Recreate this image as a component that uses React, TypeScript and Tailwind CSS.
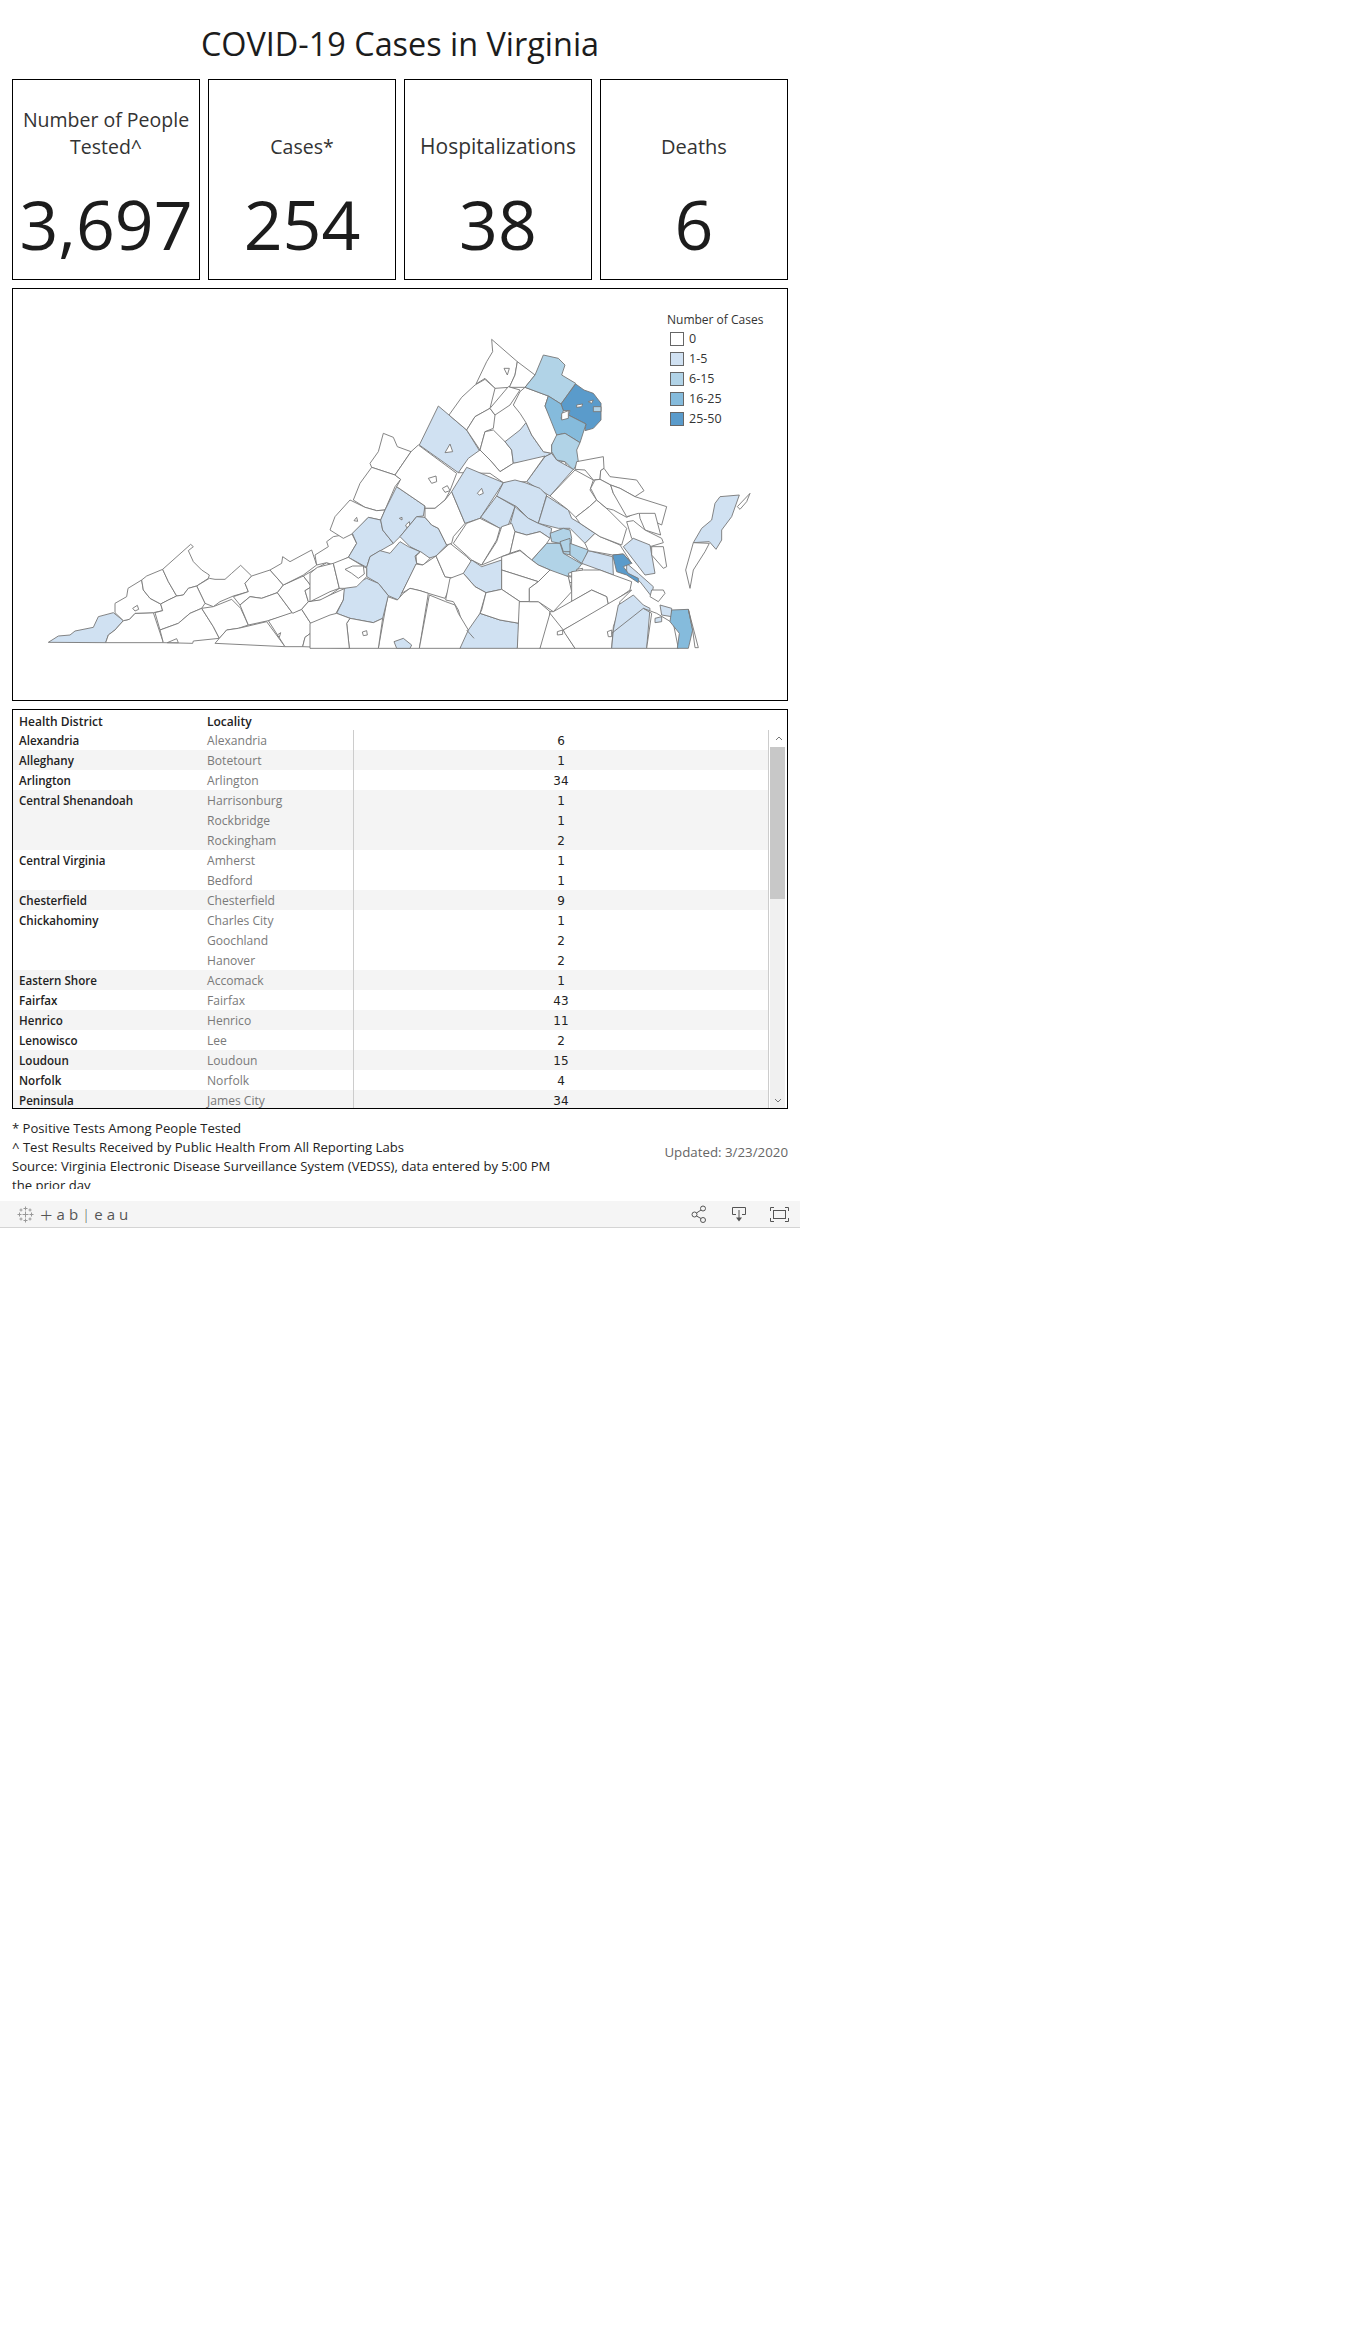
const FONT = "font-['Open_Sans',sans-serif]"

const C0 = '#ffffff'
const C1 = '#d0e1f2'
const C2 = '#b1d3e7'
const C3 = '#85bbdc'
const C4 = '#5a9bcb'

const stats = [
  { label: 'Number of People Tested^', value: '3,697', labelClass: 'w-[180px] text-[19.500px]' },
  { label: 'Cases*', value: '254', labelClass: 'text-[19.500px]' },
  { label: 'Hospitalizations', value: '38', labelClass: 'text-[21px]' },
  { label: 'Deaths', value: '6', labelClass: 'text-[20px]' },
]

const legend = [
  { label: '0', color: C0 },
  { label: '1-5', color: C1 },
  { label: '6-15', color: C2 },
  { label: '16-25', color: C3 },
  { label: '25-50', color: C4 },
]

const rows = [
  { district: 'Alexandria', locality: 'Alexandria', count: 6, shaded: false },
  { district: 'Alleghany', locality: 'Botetourt', count: 1, shaded: true },
  { district: 'Arlington', locality: 'Arlington', count: 34, shaded: false },
  { district: 'Central Shenandoah', locality: 'Harrisonburg', count: 1, shaded: true },
  { district: '', locality: 'Rockbridge', count: 1, shaded: true },
  { district: '', locality: 'Rockingham', count: 2, shaded: true },
  { district: 'Central Virginia', locality: 'Amherst', count: 1, shaded: false },
  { district: '', locality: 'Bedford', count: 1, shaded: false },
  { district: 'Chesterfield', locality: 'Chesterfield', count: 9, shaded: true },
  { district: 'Chickahominy', locality: 'Charles City', count: 1, shaded: false },
  { district: '', locality: 'Goochland', count: 2, shaded: false },
  { district: '', locality: 'Hanover', count: 2, shaded: false },
  { district: 'Eastern Shore', locality: 'Accomack', count: 1, shaded: true },
  { district: 'Fairfax', locality: 'Fairfax', count: 43, shaded: false },
  { district: 'Henrico', locality: 'Henrico', count: 11, shaded: true },
  { district: 'Lenowisco', locality: 'Lee', count: 2, shaded: false },
  { district: 'Loudoun', locality: 'Loudoun', count: 15, shaded: true },
  { district: 'Norfolk', locality: 'Norfolk', count: 4, shaded: false },
  { district: 'Peninsula', locality: 'James City', count: 34, shaded: true },
]

// traced at 3x: southwest of the state
const westShapes: [string, string][] = [
  [C1, '145,1087 175,1068 210,1065 225,1053 280,1042 295,1010 340,998 370,1022 345,1050 325,1065 317,1088'],
  [C0, '317,1088 325,1065 345,1050 370,1022 388,1018 405,1000 460,998 490,1088'],
  [C0, '345,998 345,970 380,950 384,925 425,900 430,930 450,955 482,972 488,992 460,998 405,1000 388,1018 370,1022'],
  [C0, '425,900 440,888 488,868 505,905 530,948 505,960 482,972 450,955 430,930'],
  [C0, '488,868 572,793 580,800 565,812 580,845 605,870 628,885 625,895 590,918 565,925 550,945 530,948 505,905'],
  [C0, '590,918 628,895 645,898 675,898 695,880 722,856 755,888 735,910 745,935 700,948 660,965 640,980 615,970'],
  [C0, '482,972 505,960 530,948 550,945 565,925 590,918 615,970 605,985 570,1000 535,1030 480,1050 465,998 488,992'],
  [C0, '480,1050 535,1030 570,1000 605,985 640,1040 658,1075 580,1083 578,1090 490,1088'],
  [C0, '605,985 640,980 695,958 722,985 745,1035 715,1045 680,1050 658,1075 640,1040'],
  [C0, '755,888 810,870 850,915 832,938 785,955 750,950 720,975 700,950 745,935 735,910'],
  [C0, '720,975 750,950 785,955 832,938 878,1000 805,1022 745,1035'],
  [C0, '645,1090 658,1075 680,1050 715,1045 800,1025 855,1100'],
  [C0, '805,1022 905,988 945,1050 915,1072 908,1100 855,1100'],
  [C0, '832,938 850,915 910,888 935,920 915,932 925,965 905,988 878,1000'],
  [C0, '810,870 845,850 848,830 870,845 935,810 950,855 910,885 850,915'],
  [C0, '910,888 980,848 1000,858 1015,890 1018,925 990,945 965,960 925,965 915,932 935,920'],
  [C0, '905,988 925,965 960,960 990,945 1035,925 1030,960 1005,1005 970,1020 945,1050'],
  [C0, '908,1100 915,1072 945,1050 970,1020 1005,1005 1050,1015 1052,1030 1040,1035 1050,1105'],
  [C0, '1000,855 1045,835 1100,865 1095,890 1070,920 1035,915 1018,925 1015,890'],
  [C0, '1035,875 1055,862 1085,858 1095,885 1072,895 1050,880'],
  [C0, '945,825 985,800 980,785 1000,770 1055,760 1070,790 1045,832 1000,855 980,848 950,855'],
  [C0, '398,985 412,976 416,988 405,993'],
  [C0, '502,1088 530,1076 535,1088'],
  [C0, '832,1065 842,1058 838,1072'],
]

// middle of the state, from the crop at 310,430
const middleShapes: [string, string][] = [
  [C0, '180,100 205,65 220,10 250,22 262,50 303,65 255,135 185,112'],
  [C0, '185,112 255,135 272,148 255,170 225,240 200,242 165,232 130,210 150,160'],
  [C0, '120,210 165,232 200,242 225,240 212,270 175,262 130,310 100,325 60,300 75,260'],
  [C0, '132,272 140,262 143,274'],
  [C1, '175,262 212,270 218,300 250,340 180,380 170,412 115,382 140,340 127,310'],
  [C1, '260,170 345,228 340,258 320,260 270,320 250,340 218,300 212,270 225,240'],
  [C0, '268,265 276,262 276,270'],
  [C0, '287,285 298,275 300,288 290,293'],
  [C0, '260,170 345,228 345,235 375,235 405,210 420,182 440,130 325,45 303,65 255,135 272,148'],
  [C0, '355,145 378,138 380,155 365,160'],
  [C0, '397,175 412,167 420,182 405,187'],
  [C1, '270,320 320,260 345,262 365,285 385,295 410,345 378,378 355,385 330,365 300,350'],
  [C1, '170,412 180,380 210,362 240,370 270,335 295,350 330,365 315,378 320,400 275,490 265,510 235,497 205,460 170,440'],
  [C0, '320,400 318,378 332,365 360,385 340,405'],
  [C0, '275,490 318,402 338,405 378,378 405,440 430,445 405,505 355,490 330,482 300,475'],
  [C0, '233,500 262,510 280,490 300,475 330,482 355,490 328,655 205,655'],
  [C1, '103,475 170,445 205,460 235,497 218,565 190,578 120,565 80,550 100,510'],
  [C0, '120,565 190,578 218,565 205,655 118,655 110,580'],
  [C0, '157,606 170,602 172,615 160,617'],
  [C0, '378,378 420,340 470,380 485,395 460,435 430,445 405,440'],
  [C0, '345,235 375,235 405,210 425,185 465,280 430,320 425,340 410,345 385,295 365,285 345,262'],
  [C0, '0,430 22,412 70,400 88,475 60,485 0,515'],
  [C0, '70,400 115,382 170,415 170,440 140,470 103,475 88,475'],
  [C0, '105,418 128,408 160,408 163,432 145,445 125,430'],
  [C0, '0,580 60,555 80,550 120,565 110,580 118,655 0,655'],
  [C1, '252,635 280,625 305,645 300,655 260,655'],
]

// north and east of the state
const eastShapes: [string, string][] = [
  [C1, '58,495 115,378 200,450 240,515 175,578'],
  [C0, '135,518 150,492 158,515'],
  [C0, '275,178 278,215 260,245 228,312 255,295 285,325 328,322 345,285 352,245'],
  [C0, '312,265 328,265 322,285'],
  [C0, '352,245 405,285 375,322 328,322 345,285'],
  [C0, '147,405 185,352 225,315 255,298 285,325 270,385 225,410 200,450'],
  [C0, '200,450 225,410 270,385 285,405 280,445 255,455 240,510'],
  [C0, '270,385 325,320 360,330 330,375 285,405'],
  [C0, '240,510 255,455 280,450 315,485 335,510 340,550 300,575 270,540'],
  [C1, '315,485 360,450 378,428 395,465 430,515 455,520 435,530 375,545 340,550 335,510'],
  [C0, '375,322 445,348 435,378 470,445 478,465 455,495 455,520 430,515 395,465 378,428 360,400 340,375 360,335'],
  [C2, '375,322 405,285 430,225 475,235 495,255 485,285 527,310 483,372 445,348'],
  [C4, '483,372 527,312 552,330 580,340 603,370 603,420 580,445 555,452 558,432 505,405 510,392 490,392'],
  [C2, '580,380 603,380 603,395 580,395'],
  [C0, '530,375 548,372 545,380 530,382'],
  [C0, '565,365 580,360 575,370'],
  [C3, '445,348 483,372 490,392 483,415 505,405 558,432 540,488 495,460 470,465 435,378'],
  [C0, '485,400 505,392 505,415 485,420'],
  [C2, '470,465 495,460 540,488 530,510 535,545 520,570 495,545 470,540 455,515 455,495'],
  [C0, '482,545 495,545 500,558 490,560'],
  [C1, '435,530 455,520 470,540 520,568 450,648 380,605'],
  [C0, '175,578 205,535 240,510 270,540 300,575 340,550 435,528 380,605 310,608 270,580'],
  [C1, '200,562 310,608 240,715 195,730 155,635'],
  [C0, '232,640 245,625 250,640 238,645'],
  [C1, '290,648 345,680 325,735 300,745 242,712'],
  [C1, '310,608 345,600 375,608 420,625 440,645 415,730 385,715 350,680 290,648'],
  [C1, '440,648 505,690 515,715 540,730 585,760 555,790 510,745 475,745 415,730'],
  [C0, '450,648 525,570 580,600 570,630 590,660 568,680 527,712 505,690'],
  [C1, '345,680 385,715 415,730 455,745 450,775 420,755 380,765 345,755 330,735'],
  [C2, '450,760 490,745 510,750 515,775 510,825 490,820 480,790 455,785'],
  [C2, '480,785 510,775 512,815 490,815'],
  [C2, '510,790 565,810 548,852 510,825'],
  [C2, '395,840 440,790 480,790 490,820 545,852 520,885 480,893 450,870 415,855'],
  [C0, '505,880 520,875 520,888 507,888'],
  [C0, '530,868 548,865 545,878 530,878'],
  [C0, '502,890 528,892 530,905 510,908'],
  [C1, '565,812 638,830 640,885 600,870 545,850'],
  [C0, '555,790 585,760 600,770 660,795 695,850 670,822 638,825 565,812'],
  [C0, '527,712 568,680 590,660 625,690 680,745 665,795 600,770 585,760 540,730'],
  [C0, '530,545 610,530 612,565 602,572 600,598 580,600 555,570 525,568'],
  [C0, '602,572 612,565 630,590 710,600 732,632 705,650 660,625 632,615 600,598'],
  [C0, '572,625 585,600 600,598 632,615 640,640 695,705 680,712 640,690 620,685 590,660'],
  [C0, '705,650 800,680 785,735 715,700 680,710 640,640 632,615 660,625'],
  [C0, '718,700 765,700 782,765 735,750 720,715'],
  [C0, '680,725 700,722 735,750 785,775 790,788 750,800 695,775'],
  [C1, '700,775 750,795 765,880 735,885 670,800'],
  [C0, '755,800 790,800 800,860 790,865 755,825'],
  [C1, '680,850 715,880 760,920 755,950 720,905 680,880'],
  [C4, '638,825 670,822 695,850 670,860 685,880 715,895 715,908 680,885 650,875'],
  [C0, '755,930 790,930 795,940 775,965 750,950'],
  [C0, '160,790 200,730 240,715 300,745 290,780 245,855 215,840'],
  [C0, '245,855 290,785 305,740 335,730 345,755 330,820 305,830'],
  [C0, '345,755 380,765 420,755 450,775 440,790 395,840 360,810 330,820'],
  [C1, '190,880 215,840 245,860 305,840 305,928 258,938 225,920'],
  [C0, '305,830 360,812 395,840 415,855 450,870 415,905 305,870'],
  [C0, '305,870 415,905 388,925 388,965 360,965 305,928'],
  [C1, '240,1000 300,1020 358,1030 352,1105 180,1105 190,1050'],
  [C0, '137,960 150,895 190,880 225,920 258,938 240,1000 205,1050 190,1040 175,990 160,965'],
  [C0, '88,945 137,965 165,975 175,1000 205,1050 180,1105 58,1105'],
  [C0, '245,990 258,938 305,928 360,965 358,1030 300,1020 240,1000'],
  [C0, '358,965 388,965 415,965 450,995 450,1040 420,1105 352,1105'],
  [C0, '388,925 415,905 450,870 505,890 515,935 460,995 415,965 388,965'],
  [C0, '515,875 550,870 600,870 640,885 695,905 690,930 625,975 620,950 575,930 515,965'],
  [C0, '460,995 575,930 620,950 625,975 490,1050 450,1040 450,995'],
  [C0, '450,1000 490,1050 525,1105 420,1105'],
  [C0, '490,1050 695,930 660,965 650,1010 640,1040 635,1105 525,1105 495,1060'],
  [C1, '655,975 700,945 730,975 750,985 740,1105 635,1105 640,1050'],
  [C0, '472,1055 488,1050 488,1063 472,1065'],
  [C0, '622,1055 635,1050 635,1070 625,1070'],
  [C0, '730,985 770,1000 820,1030 835,1105 740,1105 755,1000'],
  [C1, '780,975 815,985 815,1010 785,1005'],
  [C1, '765,1015 785,1010 785,1025 765,1028'],
  [C3, '815,990 865,988 878,1050 865,1105 832,1105 838,1060 810,1025'],
  [C0, '865,988 895,1103 885,1103 878,1050'],
  [C1, '880,788 905,745 935,720 945,670 960,650 1018,645 995,710 965,750 965,780 948,808 928,785'],
  [C0, '880,788 928,790 915,815 880,870 870,925 857,870'],
  [C0, '1012,680 1050,640 1040,665 1020,688'],
]

const Shapes = ({ items, transform }: { items: [string, string][]; transform: string }) => (
  <g transform={transform} stroke="#777777" strokeWidth="2.7" strokeLinejoin="round">
    {items.map(([color, points], i) => (
      <polygon key={i} fill={color} points={points} />
    ))}
  </g>
)

const VirginiaMap = () => (
  <svg className="absolute left-[-13px] top-[-9px]" width="800" height="420" viewBox="0 0 2400 1260">
    <Shapes items={westShapes} transform="translate(0 0)" />
    <Shapes items={middleShapes} transform="translate(930 450)" />
    <Shapes items={eastShapes} transform="translate(1200 0)" />
    <path d="M1835 1060 1930 985M1400 1050 1422 1075" stroke="#777777" strokeWidth="2.7" fill="none" />
  </svg>
)

const TableauMark = () => (
  <svg width="17" height="17" viewBox="0 0 17 17" stroke="#999999" strokeWidth="1" fill="none">
    <path d="M8.500 5.500v6M5.500 8.500h6" />
    <path d="M8.500 0.500v4M6.500 2.500h4M8.500 12.500v4M6.500 14.500h4M0.500 8.500h4M2.500 6.500v4M12.500 8.500h4M14.500 6.500v4" />
    <path d="M4 2.500v3M2.500 4h3M13 2.500v3M11.500 4h3M4 11.500v3M2.500 13h3M13 11.500v3M11.500 13h3" />
  </svg>
)

const ShareIcon = () => (
  <svg width="16" height="18" viewBox="0 0 16 18" fill="none" stroke="#555555" strokeWidth="1">
    <circle cx="3.500" cy="9.500" r="2.500" />
    <circle cx="12" cy="3.500" r="2.500" />
    <circle cx="12" cy="15" r="2.500" />
    <path d="M5.500 8 10 5M5.500 11 10 13.500" />
  </svg>
)

const DownloadIcon = () => (
  <svg width="16" height="16" viewBox="0 0 16 16" fill="none" stroke="#555555" strokeWidth="1">
    <path d="M5 8.500H1.500V1.500H14.500V8.500H11" />
    <path d="M8 4V13" />
    <path d="M5 11.500H11L8 15.500Z" fill="#555555" stroke="none" />
  </svg>
)

const FullscreenIcon = () => (
  <svg width="19" height="15" viewBox="0 0 19 15" fill="none" stroke="#555555" strokeWidth="1">
    <path d="M0.500 4V0.500H4M15 0.500H18.500V4M18.500 11V14.500H15M4 14.500H0.500V11" />
    <rect x="3.500" y="3.500" width="12" height="8" />
  </svg>
)

export default function App() {
  return (
    <div className={`${FONT} min-h-[2326px] w-[800px] bg-white text-[#222]`}>
      <h1 className="flex h-[79px] items-center justify-center pt-[7px] text-[32.400px] font-normal text-[#1c1c1c]">
        COVID-19 Cases in Virginia
      </h1>

      <div className="flex gap-2 px-3">
        {stats.map((stat) => (
          <div key={stat.value} className="h-[201px] w-[188px] border border-black">
            <div className="flex h-[80px] items-end justify-center">
              <div className={`${stat.labelClass} text-center leading-[27px] text-[#333]`}>{stat.label}</div>
            </div>
            <div className="mt-[32px] text-center text-[68px] leading-[64px] text-[#1c1c1c]">{stat.value}</div>
          </div>
        ))}
      </div>

      <div className="relative mx-3 mt-2 h-[413px] border border-black">
        <VirginiaMap />
        <div className="absolute left-[654px] top-[22px] text-[12px] text-[#333]">
          <div className="leading-[18px]">Number of Cases</div>
          <div className="mt-[3px] flex flex-col gap-[6px] pl-[3px]">
            {legend.map((item) => (
              <div key={item.label} className="flex h-[14px] items-center gap-[5px] text-[12.500px]">
                <span className="h-[14px] w-[14px] border border-[#666]" style={{ backgroundColor: item.color }} />
                <span>{item.label}</span>
              </div>
            ))}
          </div>
        </div>
      </div>

      <div className="mx-3 mt-2 h-[400px] overflow-hidden border border-black text-[12px]">
        <div className="flex h-5 items-center pt-[3px] font-semibold text-[#222]">
          <div className="w-[194px] pl-[6px]">Health District</div>
          <div>Locality</div>
        </div>
        <div className="flex">
          <div className="flex-1">
            {rows.map((row) => (
              <div
                key={row.locality}
                className={`grid h-5 grid-cols-[194px_146px_1fr] items-center ${row.shaded ? 'bg-[#f4f4f4]' : 'bg-white'}`}
              >
                <div className="pl-[6px] pt-[2px] text-[11.600px] font-semibold text-[#222]">{row.district}</div>
                <div className="pt-[2px] text-[12.100px] text-[#7a7a7a]">{row.locality}</div>
                <div className="flex h-5 items-center justify-center border-l border-[#cccccc] pt-[1px] font-['DejaVu_Sans',sans-serif] text-[12px] text-[#222]">
                  {row.count}
                </div>
              </div>
            ))}
          </div>
          <div className="flex h-[378px] w-[19px] flex-col border-l border-[#cccccc] pl-px">
            <div className="flex h-[17px] items-center justify-center">
              <svg width="8" height="5" viewBox="0 0 8 5" fill="none" stroke="#777" strokeWidth="1">
                <path d="M1 4 4 1l3 3" />
              </svg>
            </div>
            <div className="h-[152px] w-[15px] bg-[#c8c8c8]" />
            <div className="w-[15px] flex-1 bg-[#f0f0f0]" />
            <div className="flex h-[16px] w-[15px] items-center justify-center bg-[#f0f0f0]">
              <svg width="8" height="5" viewBox="0 0 8 5" fill="none" stroke="#777" strokeWidth="1">
                <path d="M1 1l3 3 3-3" />
              </svg>
            </div>
          </div>
        </div>
      </div>

      <div className="mx-3 mt-[10px] flex h-[70px] justify-between overflow-hidden text-[13.100px] leading-[19px] text-[#222]">
        <div className="w-[550px]">
          <div>* Positive Tests Among People Tested</div>
          <div>^ Test Results Received by Public Health From All Reporting Labs</div>
          <div>Source: Virginia Electronic Disease Surveillance System (VEDSS), data entered by 5:00 PM the prior day</div>
        </div>
        <div className="pt-[24px] text-[13.300px] text-[#666]">Updated: 3/23/2020</div>
      </div>

      <div className="mt-[12px] flex h-[27px] items-center border-b border-[#d4d4d4] bg-[#f5f5f5] pl-[17px] pr-[11px]">
        <TableauMark />
        <span className="ml-[6px] flex items-center gap-[4px] text-[15px] leading-none text-[#555]">
          <span className="text-[22px] font-light">+</span>
          <span>a</span>
          <span>b</span>
          <span className="font-light">|</span>
          <span>e</span>
          <span>a</span>
          <span>u</span>
        </span>
        <div className="ml-auto flex items-center">
          <ShareIcon />
          <div className="ml-[24px]">
            <DownloadIcon />
          </div>
          <div className="ml-[23px]">
            <FullscreenIcon />
          </div>
        </div>
      </div>
    </div>
  )
}
